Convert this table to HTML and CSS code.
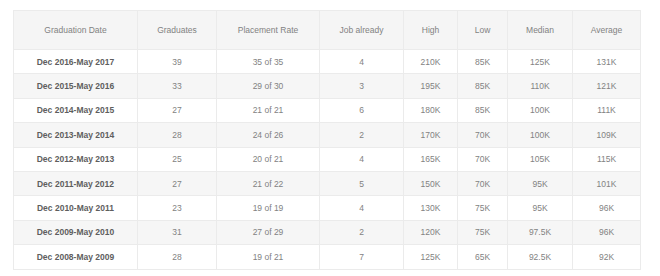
FILE: index.html
```html
<!DOCTYPE html>
<html lang="en">
<head>
    <meta charset="UTF-8">
    <meta name="viewport" content="width=device-width, initial-scale=1.0">
    <title>Graduate Placement</title>
    <link rel="stylesheet" href="styles.css">
</head>
<body>

<table class="placement-table">
    <colgroup>
        <col class="col-date">
        <col class="col-grads">
        <col class="col-rate">
        <col class="col-job">
        <col class="col-high">
        <col class="col-low">
        <col class="col-median">
        <col class="col-avg">
    </colgroup>
    <thead>
        <tr>
            <th>Graduation Date</th>
            <th>Graduates</th>
            <th>Placement Rate</th>
            <th>Job already</th>
            <th>High</th>
            <th>Low</th>
            <th>Median</th>
            <th>Average</th>
        </tr>
    </thead>
    <tbody>
        <tr><td class="term">Dec 2016-May 2017</td><td>39</td><td>35 of 35</td><td>4</td><td>210K</td><td>85K</td><td>125K</td><td>131K</td></tr>
        <tr><td class="term">Dec 2015-May 2016</td><td>33</td><td>29 of 30</td><td>3</td><td>195K</td><td>85K</td><td>110K</td><td>121K</td></tr>
        <tr><td class="term">Dec 2014-May 2015</td><td>27</td><td>21 of 21</td><td>6</td><td>180K</td><td>85K</td><td>100K</td><td>111K</td></tr>
        <tr><td class="term">Dec 2013-May 2014</td><td>28</td><td>24 of 26</td><td>2</td><td>170K</td><td>70K</td><td>100K</td><td>109K</td></tr>
        <tr><td class="term">Dec 2012-May 2013</td><td>25</td><td>20 of 21</td><td>4</td><td>165K</td><td>70K</td><td>105K</td><td>115K</td></tr>
        <tr><td class="term">Dec 2011-May 2012</td><td>27</td><td>21 of 22</td><td>5</td><td>150K</td><td>70K</td><td>95K</td><td>101K</td></tr>
        <tr><td class="term">Dec 2010-May 2011</td><td>23</td><td>19 of 19</td><td>4</td><td>130K</td><td>75K</td><td>95K</td><td>96K</td></tr>
        <tr><td class="term">Dec 2009-May 2010</td><td>31</td><td>27 of 29</td><td>2</td><td>120K</td><td>75K</td><td>97.5K</td><td>96K</td></tr>
        <tr><td class="term">Dec 2008-May 2009</td><td>28</td><td>19 of 21</td><td>7</td><td>125K</td><td>65K</td><td>92.5K</td><td>92K</td></tr>
    </tbody>
</table>

</body>
</html>
```

FILE: styles.css
```css
:root {
    --text-color: #828282;
    --strong-text-color: #5e5e5e;
    --header-background: #f5f5f5;
    --stripe-background: #f6f6f6;
    --border-color: #ebebeb;
}

body {
    margin: 0;
    padding: 10px 13px;
    background: #ffffff;
    font-family: "Liberation Sans", Arial, sans-serif;
    color: var(--text-color);
}

.placement-table {
    width: 627px;
    border-collapse: collapse;
    table-layout: fixed;
    font-size: 8.5px;
    text-align: center;
    border: 1px solid var(--border-color);
}

.col-date { width: 124px; }
.col-grads { width: 79px; }
.col-rate { width: 103px; }
.col-job { width: 84px; }
.col-high { width: 54px; }
.col-low { width: 50px; }
.col-median { width: 65px; }
.col-avg { width: 68px; }

.placement-table th {
    height: 38px;
    padding: 0;
    font-weight: normal;
    background: var(--header-background);
    border: 1px solid var(--border-color);
}

.placement-table td {
    height: 23.4px;
    padding: 0;
    border: 1px solid var(--border-color);
}

.placement-table tbody tr:nth-child(even) {
    background: var(--stripe-background);
}

.placement-table td.term {
    font-weight: bold;
    color: var(--strong-text-color);
}
```
